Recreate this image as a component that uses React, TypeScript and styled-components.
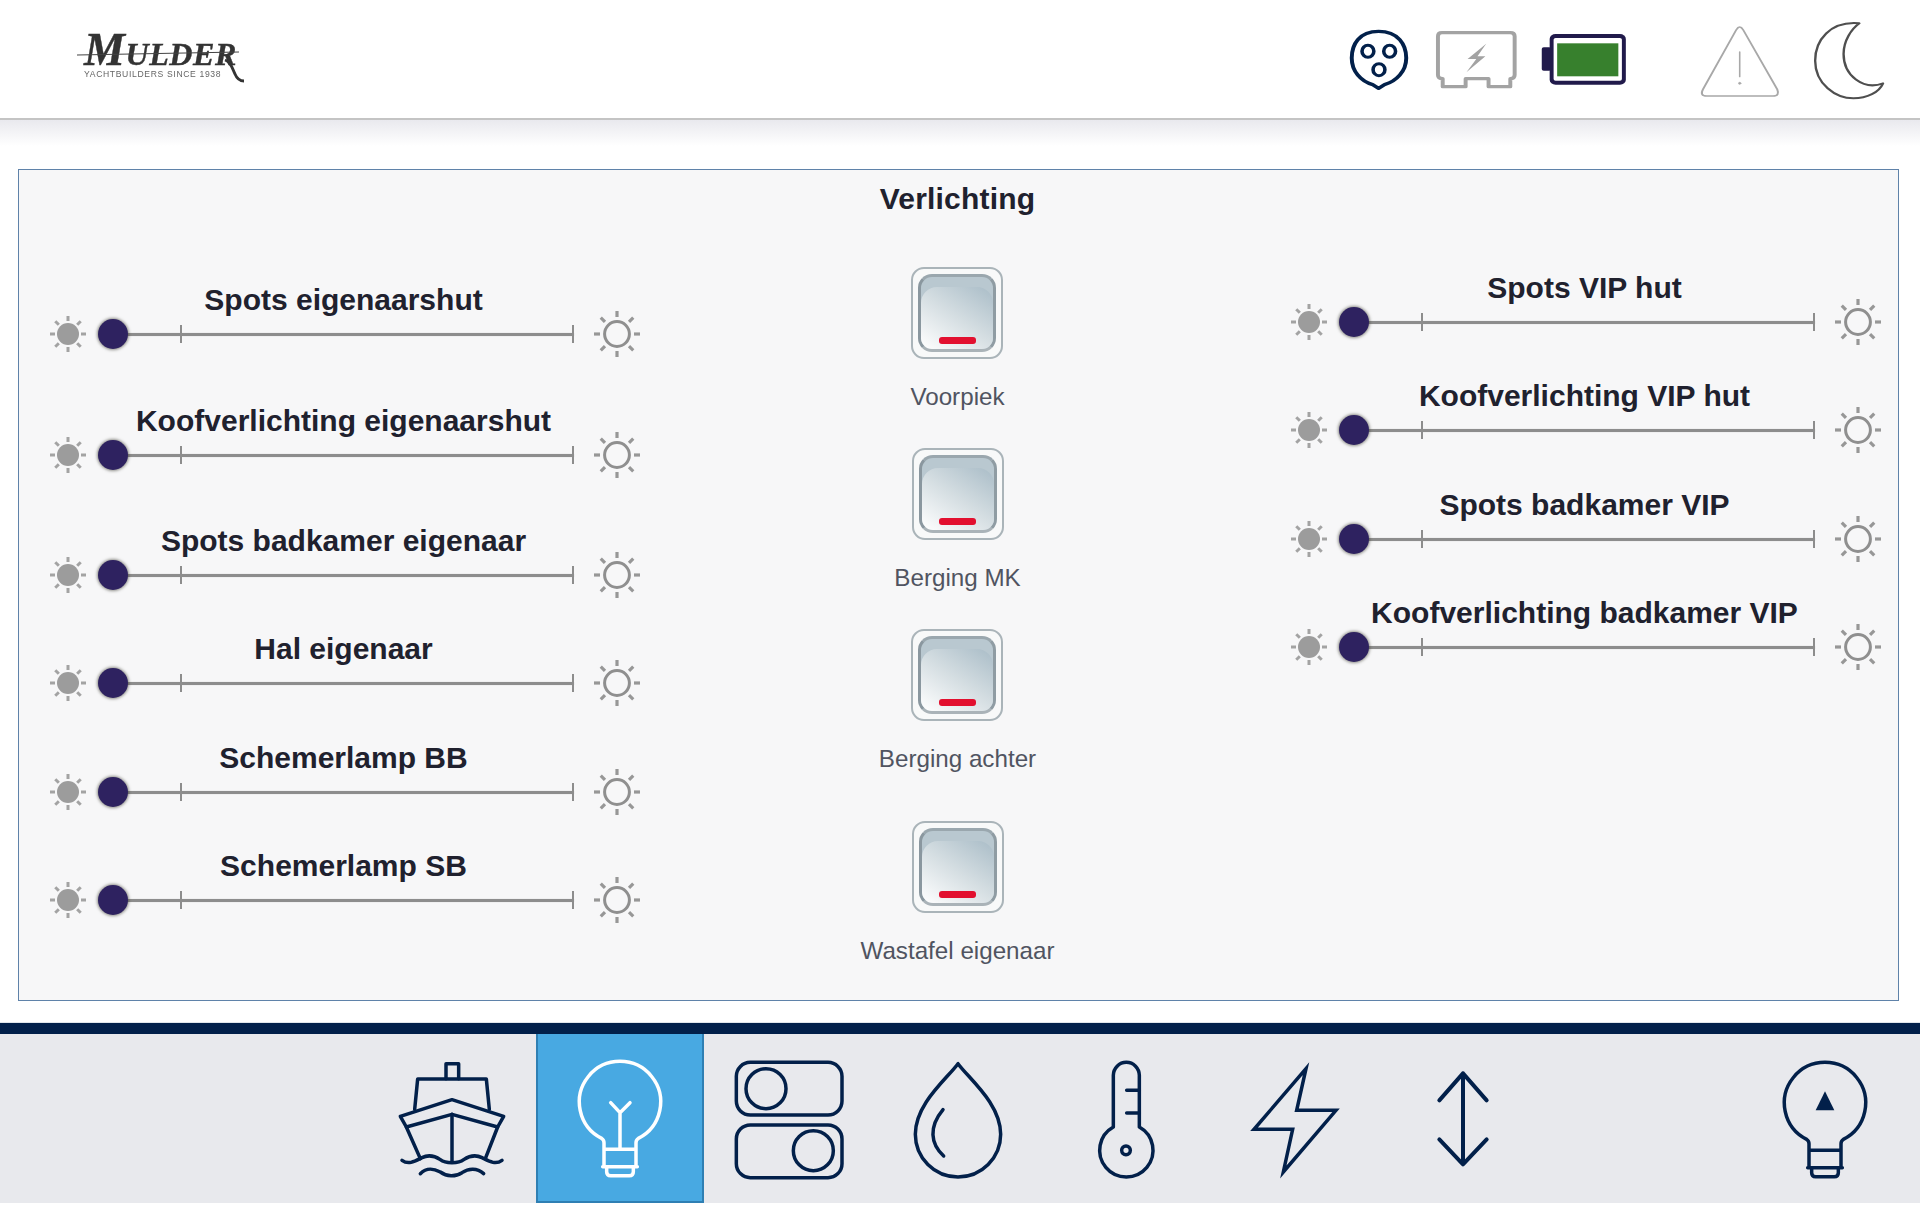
import React from "react";
import styled, { createGlobalStyle } from "styled-components";

const Global = createGlobalStyle`
  html, body { margin: 0; padding: 0; background: #fff; }
  body { font-family: "Liberation Sans", Arial, sans-serif; }
`;

const Page = styled.div`
  width: 1920px;
  height: 1213px;
  display: flex;
  flex-direction: column;
  overflow: hidden;
  background: #fff;
`;

const Header = styled.header`
  height: 118px;
  flex: none;
  display: flex;
  align-items: flex-start;
  justify-content: space-between;
  padding: 0 33px 0 77px;
  border-bottom: 2px solid #c4c4c4;
`;

const Logo = styled.div`
  position: relative;
  margin-top: 30px;
  width: 166px;
  height: 56px;
  filter: blur(0.5px);
  color: #333;
`;

const LogoMark = styled.div`
  font-family: "Liberation Serif", serif;
  font-weight: 700;
  font-style: italic;
  font-size: 32px;
  line-height: 40px;
  letter-spacing: 0.6px;
  white-space: nowrap;
  padding-left: 7px;
  -webkit-text-stroke: 0.4px #333;
  span { font-size: 46px; }
`;

const LogoStrike = styled.div`
  position: absolute;
  left: 0;
  top: 23px;
  width: 162px;
  height: 1px;
  background: #444;
  transform: rotate(-1deg);
`;

const LogoTail = styled.svg`
  position: absolute;
  left: 142px;
  top: 20px;
  width: 34px;
  height: 34px;
`;

const LogoTag = styled.div`
  font-size: 8.6px;
  line-height: 10px;
  letter-spacing: 0.65px;
  white-space: nowrap;
  color: #666;
  padding-left: 7px;
  margin-top: -5px;
`;

const Status = styled.div`
  display: flex;
  align-items: center;
  height: 118px;
  padding-top: 2px;
  box-sizing: border-box;
`;

const StatusIcon = styled.svg<{ $w: number; $h: number; $ml?: number }>`
  width: ${(p) => p.$w}px;
  height: ${(p) => p.$h}px;
  margin-left: ${(p) => p.$ml ?? 0}px;
  flex: none;
  fill: none;
  stroke-linejoin: round;
  stroke-linecap: round;
`;

const Main = styled.main`
  flex: none;
  padding: 49px 21px 22px 18px;
  background: linear-gradient(#e9e9ee, #ffffff 26px);
`;

const Panel = styled.section`
  height: 832px;
  box-sizing: border-box;
  border: 1px solid #5f82a9;
  background: #f7f7f8;
  padding: 11px 17px 0 31px;
`;

const Title = styled.h1`
  margin: 0 0 0 -14px;
  padding-right: 2px;
  text-align: center;
  font-size: 30px;
  letter-spacing: 0.2px;
  line-height: 36px;
  font-weight: 700;
  color: #20212e;
`;

const Columns = styled.div`
  display: grid;
  grid-template-columns: 590px 1fr 590px;
`;

const SliderColumn = styled.div<{ $top: number }>`
  padding-top: ${(p) => p.$top}px;
`;

const SliderRow = styled.div<{ $after: number }>`
  display: grid;
  grid-template-columns: 48px 496px 46px;
  grid-template-rows: 36px 30px;
  margin-bottom: ${(p) => p.$after}px;
  width: 590px;
`;

const SliderLabel = styled.div`
  grid-column: 2;
  grid-row: 1;
  margin-top: -1px;
  padding: 0 20px 0 15px;
  text-align: center;
  font-size: 30px;
  line-height: 36px;
  font-weight: 700;
  color: #20212e;
  white-space: nowrap;
`;

const Sun = styled.svg<{ $size: number }>`
  grid-row: 2;
  align-self: center;
  justify-self: start;
  width: ${(p) => p.$size}px;
  height: ${(p) => p.$size}px;
  overflow: visible;
`;

const Track = styled.div`
  grid-column: 2;
  grid-row: 2;
  position: relative;
  height: 30px;
  margin-right: 20px;
`;

const TrackLine = styled.div`
  position: absolute;
  left: 15px;
  right: 0;
  top: 14px;
  height: 3px;
  background: #8d8d8d;
  box-shadow: 0 0 1px #b5b5b5;
`;

const Tick = styled.div<{ $left?: number }>`
  position: absolute;
  top: 6px;
  width: 2px;
  height: 18px;
  background: #8d8d8d;
  ${(p) => (p.$left !== undefined ? `left: ${p.$left}px;` : "right: 0;")}
`;

const Knob = styled.div`
  position: absolute;
  left: 0;
  top: 0;
  width: 30px;
  height: 30px;
  border-radius: 50%;
  background: #2e2260;
  box-shadow: 0 0 3px 1px rgba(60, 60, 50, 0.55);
`;

const SwitchColumn = styled.div`
  padding: 50px 16px 0 0;
  display: flex;
  flex-direction: column;
  align-items: center;
`;

const SwitchItem = styled.div<{ $after: number }>`
  display: flex;
  flex-direction: column;
  align-items: center;
  margin-bottom: ${(p) => p.$after}px;
`;

const SwitchFrame = styled.div`
  width: 92px;
  height: 92px;
  box-sizing: border-box;
  padding: 5px;
  border: 2px solid #aab4b9;
  border-radius: 13px;
  background: #f8f9f9;
`;

const SwitchFace = styled.div`
  position: relative;
  height: 100%;
  box-sizing: border-box;
  border: 3px solid;
  border-color: #9aa7ae #8f9ca3 #aab3b8 #8a979f;
  border-radius: 14px;
  background: #b9c8d0;
  overflow: hidden;
  &::before {
    content: "";
    position: absolute;
    inset: 10px 0 0 0;
    border-radius: 16px 16px 0 0;
    background: linear-gradient(215deg, #a9bcc7 0%, #d5dee2 50%, #ffffff 100%);
  }
`;

const SwitchLed = styled.div`
  position: absolute;
  left: 50%;
  bottom: 5px;
  width: 37px;
  height: 7px;
  margin-left: -18.5px;
  border-radius: 3px;
  background: #e2102f;
`;

const SwitchLabel = styled.div`
  margin-top: 23px;
  font-size: 24.2px;
  line-height: 30px;
  color: #505461;
  white-space: nowrap;
`;

const Bar = styled.div`
  flex: none;
  height: 11px;
  background: #02204a;
  box-shadow: 0 0 1px #516a8a;
`;

const Nav = styled.nav`
  flex: none;
  height: 169px;
  display: flex;
  padding: 0 11px 0 367px;
  background: #e8e9ed;
`;

const NavTile = styled.div<{ $active?: boolean; $push?: boolean }>`
  width: 168.5px;
  flex: none;
  box-sizing: border-box;
  display: flex;
  align-items: center;
  justify-content: center;
  color: ${(p) => (p.$active ? "#ffffff" : "#02204a")};
  background: ${(p) => (p.$active ? "#48a9e2" : "transparent")};
  border: ${(p) => (p.$active ? "2px solid #2f7fb3" : "none")};
  border-top: none;
  margin-left: ${(p) => (p.$push ? "auto" : "0")};
`;

const NavIcon = styled.svg<{ $stroke?: number }>`
  width: 120px;
  height: 120px;
  overflow: visible;
  fill: none;
  stroke: currentColor;
  stroke-width: ${(p) => p.$stroke ?? 10.5};
  stroke-linejoin: round;
  stroke-linecap: round;
`;

const rays = [0, 45, 90, 135, 180, 225, 270, 315];

const SmallSun = () => (
  <Sun $size={36} viewBox="-18 -18 36 36">
    <circle r="11" fill="#9c9c9c" />
    {rays.map((r) => (
      <line key={r} x1="0" y1="-13" x2="0" y2="-18" stroke="#a3a3a3" strokeWidth="3" transform={`rotate(${r})`} />
    ))}
  </Sun>
);

const BigSun = () => (
  <Sun $size={46} viewBox="-23 -23 46 46">
    <circle r="12.4" fill="none" stroke="#8f8f8f" strokeWidth="3" />
    {rays.map((r) => (
      <line key={r} x1="0" y1="-17" x2="0" y2="-23" stroke="#979797" strokeWidth="3.2" transform={`rotate(${r})`} />
    ))}
  </Sun>
);

const Slider = ({ label, after }: { label: string; after: number }) => (
  <SliderRow $after={after}>
    <SliderLabel>{label}</SliderLabel>
    <SmallSun />
    <Track>
      <TrackLine />
      <Tick $left={82} />
      <Tick />
      <Knob />
    </Track>
    <BigSun />
  </SliderRow>
);

const Switch = ({ label, after }: { label: string; after: number }) => (
  <SwitchItem $after={after}>
    <SwitchFrame>
      <SwitchFace>
        <SwitchLed />
      </SwitchFace>
    </SwitchFrame>
    <SwitchLabel>{label}</SwitchLabel>
  </SwitchItem>
);

const bulbPath =
  "M672 472V400Q672 392 665 387A122 122 0 1 1 775 387Q768 392 768 400V472M672 420H768M668 472H772M680 472V487Q680 499 692 499H748Q760 499 760 487V472";

const leftSliders: [string, number][] = [
  ["Spots eigenaarshut", 55],
  ["Koofverlichting eigenaarshut", 54.5],
  ["Spots badkamer eigenaar", 42],
  ["Hal eigenaar", 42.5],
  ["Schemerlamp BB", 42.5],
  ["Schemerlamp SB", 0],
];

const rightSliders: [string, number][] = [
  ["Spots VIP hut", 42.6],
  ["Koofverlichting VIP hut", 42.6],
  ["Spots badkamer VIP", 42.6],
  ["Koofverlichting badkamer VIP", 0],
];

const switches: [string, number][] = [
  ["Voorpiek", 36],
  ["Berging MK", 36],
  ["Berging achter", 47],
  ["Wastafel eigenaar", 0],
];

export default function App() {
  return (
    <Page>
      <Global />
      <Header>
        <Logo>
          <LogoMark>
            <span>M</span>ULDER
          </LogoMark>
          <LogoStrike />
          <LogoTail viewBox="0 0 34 34">
            <path d="M6 10C12 12 13 18 16 24C18 29 21 31 25 31" fill="none" stroke="#333" strokeWidth="2.8" />
          </LogoTail>
          <LogoTag>YACHTBUILDERS SINCE 1938</LogoTag>
        </Logo>
        <Status>
          <StatusIcon $w={63.2} $h={63.3} viewBox="120 85 160 190" preserveAspectRatio="none" stroke="#02204a" strokeWidth="10">
            <path d="M200 95C250 95 270 135 270 175C270 215 245 245 215 255L200 266L185 255C155 245 132 215 132 175C132 135 150 95 200 95Z" />
            <ellipse cx="173" cy="155" rx="15" ry="18" strokeWidth="9" />
            <ellipse cx="228" cy="155" rx="15" ry="18" strokeWidth="9" />
            <ellipse cx="201" cy="210" rx="15" ry="18" strokeWidth="9" />
          </StatusIcon>
          <StatusIcon $w={85} $h={63.3} $ml={23.8} viewBox="340 85 215 190" preserveAspectRatio="none" stroke="#a3a3a3" strokeWidth="10">
            <path d="M360 99H533Q544 99 544 110V226Q544 237 533 237V261H478V237H420V261H362V237Q350 237 350 226V110Q350 99 360 99Z" />
            <path d="M472 132L425 178H447L422 218L470 170H450Z" fill="#a3a3a3" stroke="none" />
          </StatusIcon>
          <StatusIcon $w={90} $h={63.3} $ml={19.6} viewBox="605 85 228 190" preserveAspectRatio="none">
            <rect x="612" y="143" width="24" height="70" rx="5" fill="#211a4b" />
            <rect x="632" y="103" width="193" height="152" rx="15" fill="#211a4b" />
            <rect x="642" y="115" width="173" height="128" rx="5" fill="#ffffff" />
            <rect x="651" y="131" width="155" height="99" fill="#37802d" />
          </StatusIcon>
          <StatusIcon $w={83} $h={76.7} $ml={70} viewBox="1010 60 210 230" preserveAspectRatio="none" stroke="#a8a8a8" strokeWidth="5">
            <path d="M1104 84Q1113 66 1122 84L1208 262Q1215 282 1197 282H1030Q1011 282 1020 262Z" />
            <path d="M1113 150V224" strokeWidth="4" />
            <circle cx="1113" cy="244" r="3" fill="#a8a8a8" strokeWidth="2" />
          </StatusIcon>
          <StatusIcon $w={75} $h={81.7} $ml={30} viewBox="1295 55 190 245" preserveAspectRatio="none" stroke="#4f4f4f" strokeWidth="6">
            <path d="M1415 68C1340 60 1303 120 1303 180C1303 250 1355 293 1400 293C1435 293 1465 275 1475 248C1425 270 1375 225 1375 160C1375 120 1395 85 1415 68Z" />
          </StatusIcon>
        </Status>
      </Header>
      <Main>
        <Panel>
          <Title>Verlichting</Title>
          <Columns>
            <SliderColumn $top={65.5}>
              {leftSliders.map(([label, after]) => (
                <Slider key={label} label={label} after={after} />
              ))}
            </SliderColumn>
            <SwitchColumn>
              {switches.map(([label, after]) => (
                <Switch key={label} label={label} after={after} />
              ))}
            </SwitchColumn>
            <SliderColumn $top={53.5}>
              {rightSliders.map(([label, after]) => (
                <Slider key={label} label={label} after={after} />
              ))}
            </SliderColumn>
          </Columns>
        </Panel>
      </Main>
      <Bar />
      <Nav>
        <NavTile>
          <NavIcon viewBox="32 146 360 360">
            <path d="M197 205V160H235V205" />
            <path d="M103 297L112 206H318L327 297" />
            <path d="M60 318L215 268L370 318L352 350L215 312L78 350Z" />
            <path d="M78 350L120 445M352 350L315 445M215 312V455" />
            <path d="M65 450C85 465 105 452 125 442C145 432 165 438 180 448C195 460 235 460 250 448C265 438 285 432 305 442C325 452 345 465 365 450" />
            <path d="M120 490C140 470 160 475 180 485C200 500 225 500 245 487C265 473 290 472 310 490" />
          </NavIcon>
        </NavTile>
        <NavTile $active>
          <NavIcon viewBox="540 146 360 360">
            <path d={bulbPath} />
            <path d="M692 280L720 310L750 280M720 310V420" />
          </NavIcon>
        </NavTile>
        <NavTile>
          <NavIcon viewBox="1044 146 360 360">
            <rect x="1069" y="156" width="317" height="158" rx="42" />
            <circle cx="1158" cy="235" r="60" />
            <rect x="1069" y="344" width="317" height="158" rx="42" />
            <circle cx="1300" cy="421" r="60" />
          </NavIcon>
        </NavTile>
        <NavTile>
          <NavIcon viewBox="50 146 360 360">
            <path d="M233 160C200 205 105 280 105 372A128 128 0 0 0 361 372C361 280 266 205 233 160Z" />
            <path d="M188 298C145 350 150 400 190 437" />
          </NavIcon>
        </NavTile>
        <NavTile>
          <NavIcon viewBox="555 146 360 360">
            <path d="M700 350V195A39 39 0 0 1 778 195V350A80 80 0 1 1 700 350Z" />
            <path d="M740 240H778M740 308H778" />
            <circle cx="738" cy="420" r="13" />
          </NavIcon>
        </NavTile>
        <NavTile>
          <NavIcon viewBox="1062 146 360 360">
            <path d="M1278 175L1122 357H1238L1210 485L1368 300H1250Z" strokeLinejoin="miter" strokeMiterlimit="8" />
          </NavIcon>
        </NavTile>
        <NavTile>
          <NavIcon viewBox="-183 146 360 360" $stroke={12}>
            <path d="M0 189V462M-71 270L0 189L71 270M-71 387L0 462L71 387" />
          </NavIcon>
        </NavTile>
        <NavTile $push>
          <NavIcon viewBox="540 146 360 360" $stroke={10.5}>
            <path d={bulbPath} />
            <path d="M720 243L748 300H692Z" fill="currentColor" stroke="none" />
          </NavIcon>
        </NavTile>
      </Nav>
    </Page>
  );
}
